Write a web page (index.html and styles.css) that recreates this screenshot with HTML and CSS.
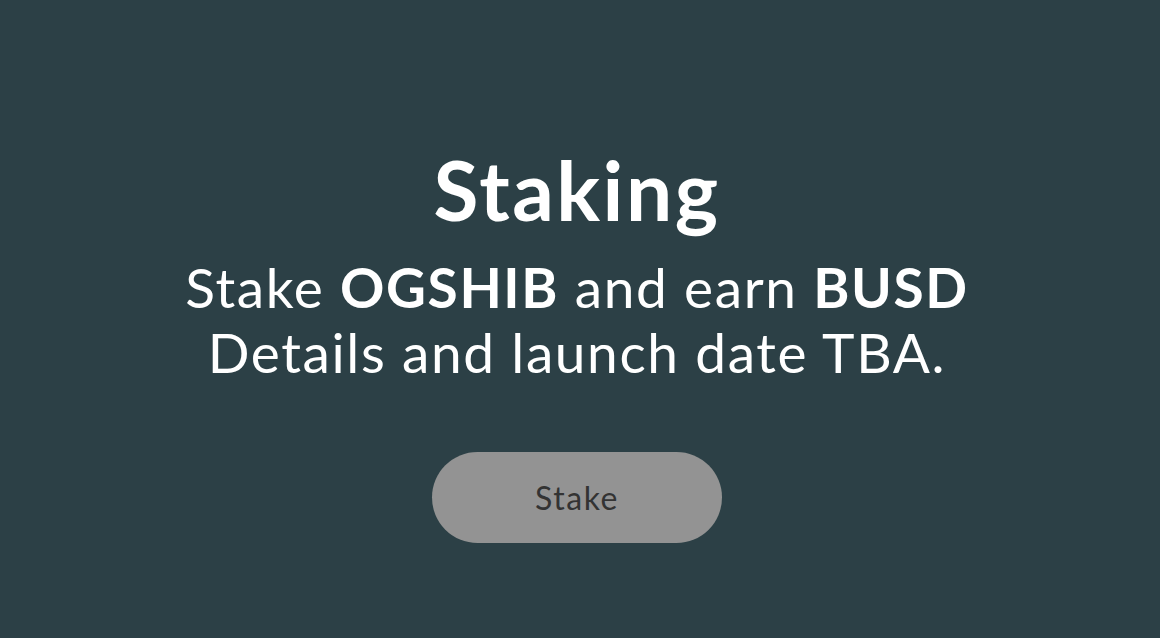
FILE: index.html
```html
<!DOCTYPE html>
<html lang="en">
<head>
    <meta charset="UTF-8">
    <meta name="viewport" content="width=device-width, initial-scale=1.0">
    <title>Staking</title>
    <link rel="stylesheet" href="styles.css">
</head>
<body>
    <div class="staking">
        <h1>Staking</h1>
        <p class="staking-info">
            Stake <strong>OGSHIB</strong> and earn <strong>BUSD</strong><br>
            Details and launch date TBA.
        </p>
        <button class="stake-button" disabled>Stake</button>
    </div>
</body>
</html>
```

FILE: styles.css
```css
html, body {
    height: 100%;
}

body {
    margin: 0;
    background: #2c4046;
    font-family: 'Lato', 'Noto Sans', sans-serif;
    color: #fff;
}

.staking {
    display: flex;
    flex-direction: column;
    align-items: center;
    text-align: center;
    padding-top: 140px;
    padding-right: 6px;
}

h1 {
    margin: 0;
    font-size: 82px;
    font-weight: 700;
    line-height: 1.2;
    letter-spacing: 2.5px;
}

.staking-info {
    margin: 17px 0 0;
    font-size: 55px;
    font-weight: 400;
    line-height: 65px;
    letter-spacing: 1.6px;
}

.staking-info strong {
    font-weight: 700;
}

.stake-button {
    margin-top: 67px;
    width: 290px;
    height: 91px;
    border: none;
    border-radius: 46px;
    background: #939393;
    color: #333;
    font-family: inherit;
    font-size: 32px;
    letter-spacing: 1.5px;
}
```
